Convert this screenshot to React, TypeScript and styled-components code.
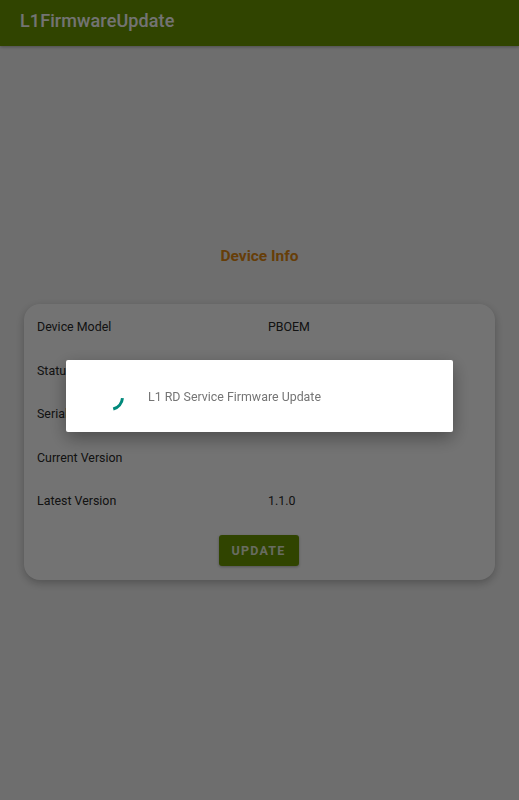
import React from 'react'
import styled, { createGlobalStyle } from 'styled-components'

const GlobalStyle = createGlobalStyle`
  html, body {
    margin: 0;
    padding: 0;
    background: #f4f4f4;
    font-family: Roboto, "Liberation Sans", Arial, sans-serif;
  }
  * {
    box-sizing: border-box;
  }
`

const rows = [
  { label: 'Device Model', value: 'PBOEM' },
  { label: 'Status', value: '' },
  { label: 'Serial Number', value: '' },
  { label: 'Current Version', value: '' },
  { label: 'Latest Version', value: '1.1.0' },
]

const App: React.FC = () => {
  return (
    <>
      <GlobalStyle />
      <StyledPage>
        <StyledToolbar>
          <StyledTitle>L1FirmwareUpdate</StyledTitle>
        </StyledToolbar>
        <StyledMain>
          <StyledHeading>Device Info</StyledHeading>
          <StyledCard>
            {rows.map((row) => (
              <StyledRow key={row.label}>
                <StyledLabel>{row.label}</StyledLabel>
                <StyledValue>{row.value}</StyledValue>
              </StyledRow>
            ))}
            <StyledButtonWrap>
              <StyledButton>Update</StyledButton>
            </StyledButtonWrap>
          </StyledCard>
        </StyledMain>
      </StyledPage>

      <StyledScrim>
        <StyledDialog>
          <Spinner />
          <StyledMessage>L1 RD Service Firmware Update</StyledMessage>
        </StyledDialog>
      </StyledScrim>
    </>
  )
}

const Spinner: React.FC = () => (
  <StyledSpinner width="28" height="28" viewBox="0 0 28 28">
    {/* arc from ~5deg to ~75deg, r 12.5 around (14,14) */}
    <path
      d="M26.45 15.09 A12.5 12.5 0 0 1 17.24 26.07"
      fill="none"
      stroke="#00897b"
      strokeWidth="3"
      strokeLinecap="butt"
    />
  </StyledSpinner>
)

const StyledPage = styled.div`
  min-height: 800px;
  display: flex;
  flex-direction: column;
`

const StyledToolbar = styled.div`
  height: 46px;
  background: #6a9800;
  display: flex;
  align-items: center;
  padding: 0 20px;
  box-shadow: 0 1px 3px rgba(0, 0, 0, 0.3);
`

const StyledTitle = styled.div`
  color: #ffffff;
  font-size: 18px;
  font-weight: 500;
  letter-spacing: 0.1px;
  margin-top: -5px;
`

const StyledMain = styled.div`
  display: flex;
  flex-direction: column;
  padding: 200px 24px 0;
`

const StyledHeading = styled.div`
  text-align: center;
  color: #e38a12;
  font-size: 15.5px;
  font-weight: 700;
  line-height: 20px;
  margin-bottom: 38px;
`

const StyledCard = styled.div`
  background: #ffffff;
  border-radius: 16px;
  padding: 0 13px 14px;
  box-shadow: 0 3px 8px rgba(0, 0, 0, 0.25);
`

const StyledRow = styled.div`
  display: grid;
  grid-template-columns: 231px 1fr;
  align-items: center;
  height: 43.5px;
  padding-top: 2px;
  font-size: 12.4px;
  color: #2a2a2a;
`

const StyledLabel = styled.div``

const StyledValue = styled.div``

const StyledButtonWrap = styled.div`
  display: flex;
  justify-content: center;
  margin-top: 13.5px;
`

const StyledButton = styled.div`
  width: 80px;
  height: 31px;
  margin-left: -2px;
  border-radius: 3px;
  background: #6a9800;
  color: rgba(255, 255, 255, 0.85);
  font-size: 12.5px;
  font-weight: 700;
  letter-spacing: 1.2px;
  text-transform: uppercase;
  display: flex;
  align-items: center;
  justify-content: center;
  box-shadow: 0 1px 3px rgba(0, 0, 0, 0.3);
`

const StyledScrim = styled.div`
  position: fixed;
  inset: 0;
  background: rgba(0, 0, 0, 0.55);
  display: flex;
  align-items: center;
  justify-content: center;
  padding-bottom: 8px;
`

const StyledDialog = styled.div`
  width: 387px;
  height: 72px;
  background: #ffffff;
  border-radius: 2px;
  box-shadow: 0 6px 18px rgba(0, 0, 0, 0.35);
  display: flex;
  align-items: center;
  padding-left: 30px;
  gap: 24px;
`

const StyledSpinner = styled.svg`
  flex-shrink: 0;
  margin-top: 2px;
`

const StyledMessage = styled.div`
  font-size: 12.4px;
  color: #757575;
  margin-top: 1px;
`

export default App
